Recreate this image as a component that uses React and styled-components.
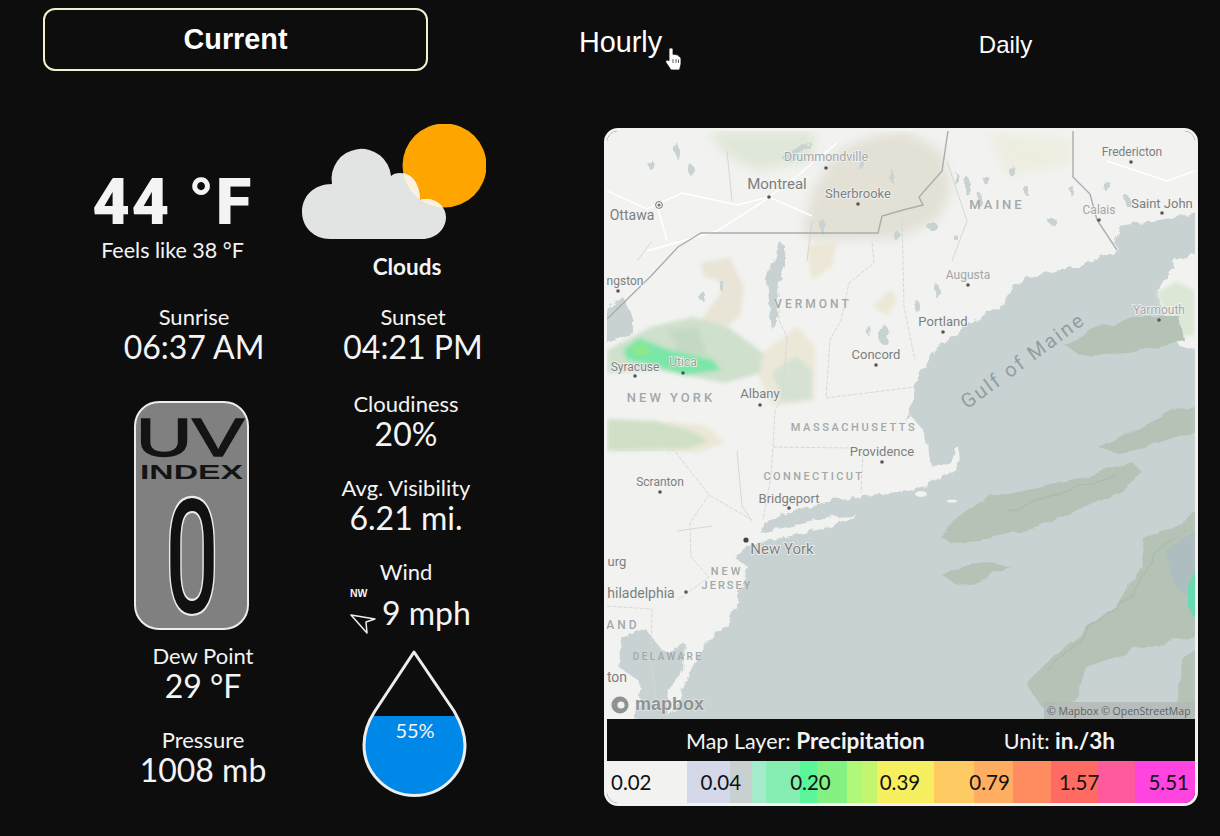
import React from "react";
import styled, { createGlobalStyle } from "styled-components";

const bodyFont = `Lato, "Open Sans", sans-serif`;

const GlobalStyle = createGlobalStyle`
  html, body {
    margin: 0;
    padding: 0;
    background: #0d0d0d;
  }
`;

const Page = styled.div`
  width: 1220px;
  height: 836px;
  box-sizing: border-box;
  padding: 8px 22px 0 43px;
  color: #f4f4f4;
  font-family: ${bodyFont};
  overflow: hidden;
`;

const Tabs = styled.div`
  display: grid;
  grid-template-columns: repeat(3, 385px);
  height: 63px;
`;

const Tab = styled.div`
  position: relative;
  display: flex;
  align-items: center;
  justify-content: center;
  box-sizing: border-box;
  font-family: "Liberation Sans", Arial, sans-serif;
  color: #fff;
  font-size: ${(props) => props.$size}px;
  font-weight: ${(props) => (props.$active ? 700 : 400)};
  padding-top: ${(props) => props.$pad || 0}px;
  border: ${(props) => (props.$active ? "2px solid #f3efcf" : "none")};
  border-radius: 12px;
`;

const Cursor = styled.svg`
  position: absolute;
  left: 237px;
  top: 39px;
`;

const Main = styled.div`
  display: flex;
  margin-top: 53px;
`;

const ColumnA = styled.div`
  width: 259px;
  display: flex;
  flex-direction: column;
  align-items: flex-start;
`;

const ColumnB = styled.div`
  width: 184px;
  display: flex;
  flex-direction: column;
  align-items: flex-start;
`;

const TempBlock = styled.div`
  width: 100%;
  height: 180px;
  box-sizing: border-box;
  padding-top: 38px;
  text-align: center;
`;

const Temp = styled.div`
  font-family: Roboto, "Liberation Sans", sans-serif;
  font-weight: 900;
  font-size: 65px;
  letter-spacing: 1.5px;
  line-height: 80px;
  color: #f3f3f3;
`;

const Feels = styled.div`
  font-size: 21.5px;
  line-height: 24px;
  margin-top: -4px;
`;

const Stat = styled.div`
  width: 100%;
  box-sizing: border-box;
  padding-left: ${(props) => props.$shift || 0}px;
  margin-top: ${(props) => props.$top || 0}px;
  text-align: center;
`;

const Label = styled.div`
  font-size: 22px;
  line-height: 24px;
  padding-top: 1px;
  margin-bottom: -1px;
`;

const Value = styled.div`
  font-size: 32px;
  line-height: 38px;
`;

const UvBadge = styled.svg`
  display: block;
  margin: 35px 0 0 91px;
`;

const WeatherIcon = styled.svg`
  display: block;
`;

const Condition = styled.div`
  width: 100%;
  box-sizing: border-box;
  padding-left: 26px;
  margin-top: 15px;
  text-align: center;
  font-size: 22.5px;
  font-weight: 700;
  line-height: 24px;
  height: 49px;
`;

const WindRow = styled.div`
  display: flex;
  align-items: flex-end;
  margin: 3px 0 0 48px;
  height: 48px;
`;

const WindDirection = styled.div`
  width: 25px;
  margin-right: 7px;
  display: flex;
  flex-direction: column;
  align-items: flex-start;
  gap: 14px;
  font-family: "Liberation Sans", sans-serif;
  font-size: 10.5px;
  font-weight: 700;
  line-height: 10px;
`;

const WindValue = styled.div`
  font-size: 32px;
  line-height: 38px;
  margin-bottom: 2px;
`;

const Humidity = styled.div`
  position: relative;
  margin: 15px 0 0 59px;
  width: 108px;
  height: 150px;
`;

const HumidityText = styled.span`
  position: absolute;
  left: 0;
  right: 0;
  top: 69px;
  text-align: center;
  font-size: 20px;
  line-height: 24px;
`;

const MapCard = styled.div`
  width: 594px;
  height: 678px;
  margin: 4px 0 0 auto;
  box-sizing: border-box;
  border: 3px solid #f2f2f0;
  border-radius: 14px;
  overflow: hidden;
  background: #0d0d0d;
  display: flex;
  flex-direction: column;
`;

const MapArt = styled.svg`
  display: block;
  flex: none;
`;

const LayerRow = styled.div`
  height: 42px;
  display: flex;
  align-items: center;
  font-size: 21.5px;
  padding-left: 79px;
`;

const LayerName = styled.b`
  font-size: 22.5px;
`;

const LayerUnit = styled.span`
  margin-left: 79px;
`;

const Legend = styled.div`
  position: relative;
  display: flex;
  height: 42px;
`;

const Swatch = styled.div`
  flex: none;
  width: ${(props) => props.$w}px;
  background: ${(props) => props.$c};
`;

const LegendLabels = styled.div`
  position: absolute;
  inset: 0;
  display: flex;
  align-items: center;
  justify-content: space-between;
  padding: 0 6px 0 4px;
  color: #111;
  font-size: 20.5px;
`;

const swatches = [
  [80, "#f2f2f0"], [43, "#d5d8e8"], [22, "#c8d0d0"], [14, "#a3ebcb"], [34, "#85eeb0"],
  [17, "#5bf59a"], [30, "#84f282"], [15, "#b0f87a"], [15, "#c4f570"], [57, "#f6f060"],
  [40, "#fecb63"], [39, "#ffad60"], [38, "#ff8b60"], [46, "#ff6a62"], [38, "#ff5a9c"],
  [60, "#ff44e0"],
];

const stops = ["0.02", "0.04", "0.20", "0.39", "0.79", "1.57", "5.51"];

const cities = [
  ["Drummondville", 219, 30, 12.500, "#a3a7a6"], ["Montreal", 170, 58, 15], ["Sherbrooke", 251, 67, 13],
  ["Ottawa", 25, 89, 14], ["Fredericton", 525, 25, 12], ["Saint John", 555, 77, 13],
  ["Calais", 492, 83, 12, "#a3a7a6"], ["Augusta", 361, 148, 12, "#a3a7a6"], ["ngston", 18, 154, 12],
  ["Portland", 336, 195, 13], ["Yarmouth", 552, 183, 12, "#a3a7a6"], ["Concord", 269, 228, 13],
  ["Syracuse", 28, 240, 12], ["Utica", 76, 235, 12, "#8aa898"], ["Albany", 153, 267, 13],
  ["Providence", 275, 325, 13], ["Scranton", 53, 355, 12], ["Bridgeport", 182, 372, 13],
  ["New York", 175, 423, 15], ["urg", 10, 435, 13], ["hiladelphia", 34, 467, 14], ["ton", 10, 551, 14],
];

const regions = [
  ["MAINE", 390, 78, 13, 3], ["VERMONT", 206, 177, 12, 3], ["NEW YORK", 64, 271, 13, 3],
  ["MASSACHUSETTS", 247, 300, 11, 2.6], ["CONNECTICUT", 207, 349, 11, 2.4], ["NEW", 120, 444, 11, 3],
  ["JERSEY", 120, 458, 11, 2], ["AND", 16, 498, 12, 3], ["DELAWARE", 61, 529, 10, 2.4],
];

const dots = [
  [162, 66], [251, 73], [219, 37], [524, 31], [555, 82], [492, 89], [361, 154], [11, 160], [336, 201],
  [552, 189], [269, 234], [28, 245], [76, 242], [153, 274], [275, 331], [53, 361], [182, 377], [79, 461],
];

const lakes = [
  [360, 55, 3, 9], [372, 68, 2, 7], [350, 48, 2, 6], [380, 50, 3, 4], [405, 40, 2, 6], [420, 60, 2, 5],
  [445, 90, 4, 3], [465, 60, 2, 5], [500, 55, 2, 6], [520, 70, 3, 5], [215, 95, 2, 8], [290, 105, 3, 5],
  [325, 95, 5, 4], [350, 108, 2, 3], [95, 165, 3, 5], [115, 155, 2, 5], [277, 204, 5, 10], [262, 200, 1.5, 5],
  [70, 20, 2, 8], [45, 35, 2, 5], [85, 40, 2, 6], [285, 45, 2, 7], [255, 35, 2, 5], [330, 160, 2, 7], [310, 175, 2, 6],
];

const MapDrawing = () => (
  <MapArt width="588" height="588" viewBox="0 0 588 588">
    <defs>
      <filter id="soft"><feGaussianBlur stdDeviation="2.2" /></filter>
      <filter id="softer" x="-20%" y="-20%" width="140%" height="140%"><feGaussianBlur stdDeviation="6" /></filter>
      <filter id="rough" x="-5%" y="-5%" width="110%" height="110%">
        <feTurbulence type="fractalNoise" baseFrequency="0.09" numOctaves="3" seed="4" />
        <feDisplacementMap in="SourceGraphic" scale="8" />
      </filter>
      <filter id="wobble" x="-10%" y="-10%" width="120%" height="120%">
        <feTurbulence type="fractalNoise" baseFrequency="0.04" numOctaves="2" seed="9" />
        <feDisplacementMap in="SourceGraphic" scale="10" />
      </filter>
    </defs>
    <rect width="588" height="588" fill="#f2f3f1" />
    {/* sea */}
    <g filter="url(#rough)">
      <path
        fill="#c9d2d3"
        d="M600 79 553 89 514 96 507 112 512 119 495 126 460 139 421 146 405 156 394 176 367 189 343 206 324 222 308 252 308 272 298 290 304 285 316 299 322 322 326 336 344 331 347 316 351 316 352 338 322 352 308 359 265 364 226 369 188 379 164 389 153 402 226 386 252 385 223 396 188 404 149 412 127 426 141 436 129 472 121 492 98 512 82 542 71 572 51 600H600Z"
      />
      <path fill="#c9d2d3" d="M-10 186 16 166 26 189 26 202-10 216Z" />
      <path fill="#c9d2d3" d="M14 508 38 497 54 518 62 522 78 512 76 540 62 556 60 600 28 600 34 552 12 536Z" />
      <path fill="#f2f3f1" d="M600 119 569 129 549 162 573 216 600 219Z" />
    </g>
    <ellipse cx="314" cy="363" rx="6" ry="3" fill="#f2f3f1" />
    <ellipse cx="345" cy="370" rx="5" ry="1.500" fill="#f2f3f1" />
    {/* precipitation over land */}
    <g filter="url(#softer)">
      <path fill="#e3e0d6" d="M195 100 205 60 230 20 265 5 300 0 335 20 345 60 330 90 290 108 205 110Z" />
      <path fill="#dfe7d8" d="M100 0 210 0 205 30 150 40 120 25Z" />
      <path fill="#eeede0" d="M380 0 470 10 460 35 400 45Z" />
    </g>
    <g filter="url(#soft)">
      <path fill="#e8e4d6" d="M93 132 123 126 137 156 133 186 110 202 93 190 113 163 113 150 97 146Z" />
      <path fill="#ece7d6" d="M200 115 230 110 225 135 205 150Z" />
      <path fill="#ece7d6" d="M265 175 285 158 290 170 280 185Z" />
      <path fill="#ece8d8" d="M145 230 190 195 208 215 208 270 165 275Z" />
      <path fill="#d5e2d2" d="M165 240 190 225 205 240 205 268 175 272Z" />
      <path fill="#cfe0cc" d="M0 219 44 196 86 186 121 196 156 222 153 242 118 252 51 239 0 242Z" />
      <path fill="#bcd4bc" opacity="0.6" d="M62 200 90 196 100 225 72 222Z" />
      <path fill="#7ae6a8" d="M16 219 32 207 63 219 106 229 114 239 79 244 44 234 20 229Z" />
      <path fill="#ece8d8" d="M60 290 100 295 118 312 90 322 60 320Z" />
      <path fill="#cfe0c6" d="M0 288 50 290 85 300 102 310 80 318 0 320Z" />
      <path fill="#dce7d6" d="M549 162 570 150 588 160 588 205 570 205Z" />
    </g>
    <path fill="#93ea80" opacity="0.7" d="M24 216 38 212 44 222 28 226Z" />
    {/* precipitation over sea */}
    <g fill="#b4c3b6" filter="url(#wobble)">
      <path d="M456 212 495 196 526 186 573 186 577 209 522 222 472 224Z" />
      <path d="M491 316 534 296 569 279 600 270 600 296 538 316 510 321Z" />
      <path d="M332 404 382 366 472 347 526 332 536 342 514 359 433 396 374 409 343 411Z" />
      <path d="M337 446 363 432 405 436 382 449 347 452Z" />
      <path d="M419 552 460 512 510 476 534 436 538 409 600 379 600 499 530 519 479 536 470 566 437 579Z" />
      <path d="M600 512 577 526 569 579 600 579Z" />
    </g>
    <g fill="none" stroke="#a8b8aa" strokeWidth="1.500" opacity="0.7" filter="url(#wobble)">
      <path d="M440 540 480 500 525 465 545 425 580 400" />
      <path d="M400 378 460 360 510 345" />
    </g>
    <path fill="#aab9c6" d="M558 420 588 400 588 470 568 455Z" opacity="0.6" />
    <path fill="#66dcb0" d="M581 455 588 440 588 488 581 475Z" />
    {/* rivers, lakes */}
    <g fill="none" stroke="#ffffff" strokeWidth="1.400">
      <path d="M0 60 40 78 75 62 130 74 162 66 205 85" />
      <path d="M162 66 190 45 230 12" />
      <path d="M160 68 110 100 40 120" />
      <path d="M50 74 60 110" />
      <path d="M500 30 560 50 588 40" />
    </g>
    <g fill="#c9d2d3" filter="url(#rough)">
      <path d="M172 110 178 115 178 135 172 150 170 185 165 200 160 150Z" />
      <path d="M190 15 205 10 185 30 175 28Z" />
      {lakes.map(([x, y, rx, ry]) => (
        <ellipse key={`${x}-${y}`} cx={x} cy={y} rx={rx} ry={ry} />
      ))}
    </g>
    <g fill="none" stroke="#c9d2d3" strokeWidth="0.800">
      <path d="M340 30 360 90 345 130" />
      <path d="M120 20 125 70M200 130 205 90M30 130 45 110M70 400 105 395" />
      <path d="M130 320 135 375 145 390" />
    </g>
    {/* state borders */}
    <g fill="none" stroke="#d6d9d7" strokeWidth="1" strokeDasharray="4 1.500">
      <path d="M295 86 297 176 308 229" />
      <path d="M265 112 267 132 242 152 234 189 223 209 219 266" />
      <path d="M219 267 308 256" />
      <path d="M172 162 172 189 180 206 176 266 168 279 166 316 164 346 156 389" />
      <path d="M166 316 242 317M256 322 254 362" />
      <path d="M145 389 102 364 83 392 84 426 102 446 71 469" />
      <path d="M9 319 67 319 102 364" />
      <path d="M0 475 45 478 44 530 50 575" />
    </g>
    <path
      fill="none"
      stroke="#a9adad"
      strokeWidth="1.400"
      d="M0 188 44 145 71 116 94 102H271L275 85 296 79 316 74 312 66 335 40 341 0M466 0V46L483 63 490 89 510 119"
    />
    {dots.map(([x, y]) => (
      <circle key={`${x}-${y}`} cx={x} cy={y} r="1.800" fill="#555" />
    ))}
    <circle cx="52" cy="74" r="3.400" fill="none" stroke="#777" />
    <circle cx="52" cy="74" r="1.600" fill="#777" />
    <circle cx="139" cy="409" r="2.600" fill="#444" />
    <g fontFamily="Roboto, 'Liberation Sans', sans-serif" textAnchor="middle" stroke="#f2f3f1" strokeWidth="1.500" paintOrder="stroke">
      {cities.map(([name, x, y, size, color]) => (
        <text key={name} x={x} y={y} fontSize={size} fill={color || "#7c7f7f"}>{name}</text>
      ))}
      {regions.map(([name, x, y, size, space]) => (
        <text key={name} x={x} y={y} fontSize={size} fontWeight="500" letterSpacing={space} fill="#a3a8a8" stroke="none">{name}</text>
      ))}
      <text x="417" y="236" fontSize="20" letterSpacing="2.200" fill="#939ea0" stroke="none" transform="rotate(-36 417 231)">Gulf of Maine</text>
    </g>
    {/* mapbox mark */}
    <circle cx="13" cy="574" r="9.500" fill="#8d9292" stroke="#f0f0f0" strokeWidth="2" />
    <circle cx="14" cy="574" r="3.600" fill="#f0f0f0" />
    <text x="28" y="579" fontFamily="'Liberation Sans', sans-serif" fontWeight="700" fontSize="18" fill="#8d9292" stroke="#f0f0f0" strokeWidth="1" paintOrder="stroke">mapbox</text>
    <rect x="437" y="571" width="151" height="17" fill="#b4bab5" opacity="0.85" />
    <text x="440" y="584" fontFamily="'Open Sans', sans-serif" fontSize="10.500" fill="#5e6463">© Mapbox © OpenStreetMap</text>
  </MapArt>
);

const Badge = () => (
  <UvBadge width="115" height="229" viewBox="0 0 115 229">
    <rect x="1" y="1" width="113" height="227" rx="24" fill="#808080" stroke="#ececec" strokeWidth="2" />
    <text x="2" y="55" textLength="108" lengthAdjust="spacingAndGlyphs" fontFamily="'Liberation Sans', sans-serif" fontSize="53" fill="#141414" stroke="#141414" strokeWidth="1.500">UV</text>
    <text x="6" y="78" textLength="103" lengthAdjust="spacingAndGlyphs" fontFamily="'Liberation Sans', sans-serif" fontWeight="700" fontSize="19.500" fill="#141414">INDEX</text>
    <text
      transform="translate(58 212) scale(1 1.680)"
      textAnchor="middle"
      fontFamily="Roboto, sans-serif"
      fontWeight="500"
      fontSize="96"
      fill="#111"
      stroke="#ececec"
      strokeWidth="1.300"
    >0</text>
  </UvBadge>
);

const cloudPath = "M28 115H120C134 115 144 105 144 93 144 83 135 75 124 75 122 75 120 75 118 76 118 60 110 49 98 49 94 49 91 50 89 52A29.800 29.800 0 1 0 30 60C12 60 0 72 0 88 0 103 12 115 28 115Z";

const Cloud = () => (
  <WeatherIcon width="184" height="116" viewBox="0 0 184 116">
    <defs>
      <clipPath id="cloudShape">
        <path d={cloudPath} />
      </clipPath>
    </defs>
    <circle cx="142.5" cy="41.5" r="42" fill="#ffa500" />
    <path fill="#e2e4e4" d={cloudPath} />
    <circle cx="142.5" cy="41.5" r="42" fill="#fcf1dc" clipPath="url(#cloudShape)" />
  </WeatherIcon>
);

const dropPath = "M53 3 14 62C6 74 3 85 3 96A50.500 50.500 0 0 0 104 96C104 85 100 74 93 62Z";

const Drop = () => (
  <svg width="108" height="150" viewBox="0 0 108 150">
    <defs>
      <clipPath id="level"><rect x="0" y="67" width="108" height="83" /></clipPath>
    </defs>
    <path clipPath="url(#level)" fill="#0088e8" d={dropPath} />
    <path fill="none" stroke="#ededed" strokeWidth="3" strokeLinejoin="round" d={dropPath} />
  </svg>
);

const App = () => (
  <Page>
    <GlobalStyle />
    <Tabs>
      <Tab $active $size={28.8}>Current</Tab>
      <Tab $size={28.8} $pad={5}>
        Hourly
        <Cursor width="17" height="24" viewBox="0 0 17 24">
          <path
            d="M4 2C4 .5 8 .5 8 2V7.500C9 7 10.500 7 11 8 12 7.500 13.500 8 14 9.500 15 9.500 16 10.500 16 12V17L14.500 23H6L1 15.500C0 13.500 2.500 12 4 14Z"
            fill="#fff"
            stroke="#111"
            strokeWidth="0.800"
            strokeLinejoin="round"
          />
          <path d="M8 12V16M11 12V16M13.500 12.500V16" stroke="#333" strokeWidth="0.800" />
        </Cursor>
      </Tab>
      <Tab $size={24} $pad={11}>Daily</Tab>
    </Tabs>
    <Main>
      <ColumnA>
        <TempBlock>
          <Temp>44 °F</Temp>
          <Feels>Feels like 38 °F</Feels>
        </TempBlock>
        <Stat $shift={43}>
          <Label>Sunrise</Label>
          <Value>06:37 AM</Value>
        </Stat>
        <Badge />
        <Stat $shift={61} $top={13}>
          <Label>Dew Point</Label>
          <Value>29 °F</Value>
        </Stat>
        <Stat $shift={61} $top={22}>
          <Label>Pressure</Label>
          <Value>1008 mb</Value>
        </Stat>
      </ColumnA>
      <ColumnB>
        <Cloud />
        <Condition>Clouds</Condition>
        <Stat $shift={38}>
          <Label>Sunset</Label>
          <Value>04:21 PM</Value>
        </Stat>
        <Stat $shift={24} $top={25}>
          <Label>Cloudiness</Label>
          <Value>20%</Value>
        </Stat>
        <Stat $shift={24} $top={22}>
          <Label>Avg. Visibility</Label>
          <Value>6.21 mi.</Value>
        </Stat>
        <Stat $shift={24} $top={22}>
          <Label>Wind</Label>
        </Stat>
        <WindRow>
          <WindDirection>
            NW
            <svg width="26" height="22" viewBox="0 0 26 22">
              <path d="M1 3 25 7 16 10 17 21Z" fill="none" stroke="#f0f0f0" strokeWidth="1.500" strokeLinejoin="round" />
            </svg>
          </WindDirection>
          <WindValue>9 mph</WindValue>
        </WindRow>
        <Humidity>
          <Drop />
          <HumidityText>55%</HumidityText>
        </Humidity>
      </ColumnB>
      <MapCard>
        <MapDrawing />
        <LayerRow>
          <span>Map Layer: <LayerName>Precipitation</LayerName></span>
          <LayerUnit>Unit: <LayerName>in./3h</LayerName></LayerUnit>
        </LayerRow>
        <Legend>
          {swatches.map(([w, c]) => (
            <Swatch key={c} $w={w} $c={c} />
          ))}
          <LegendLabels>
            {stops.map((s) => (
              <span key={s}>{s}</span>
            ))}
          </LegendLabels>
        </Legend>
      </MapCard>
    </Main>
  </Page>
);

export default App;
